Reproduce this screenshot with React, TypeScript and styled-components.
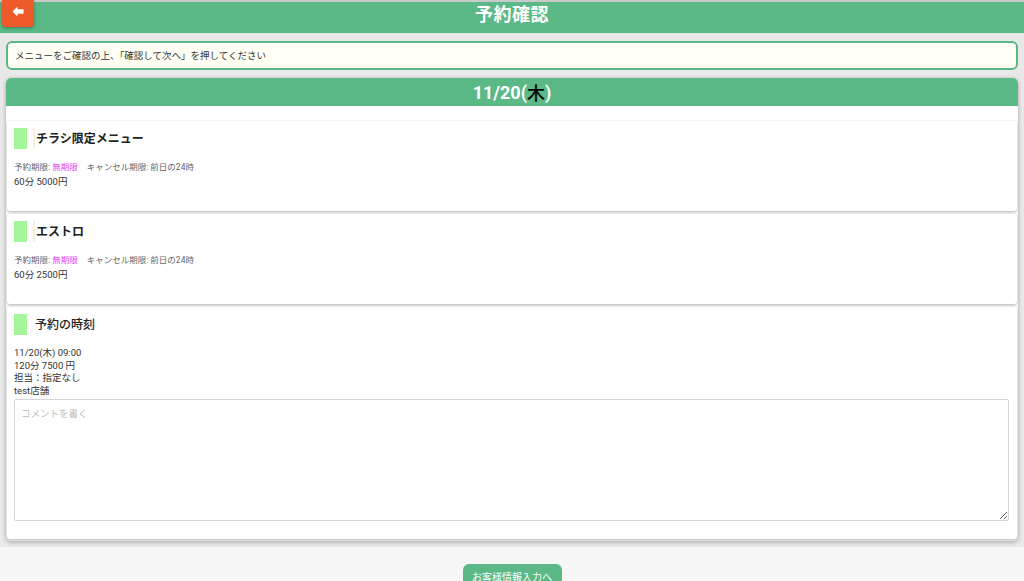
import React from "react";
import styled, { createGlobalStyle } from "styled-components";

const Global = createGlobalStyle`
  html, body { margin: 0; padding: 0; background: #f6f6f6; }
  body { font-family: Roboto, "Noto Sans CJK JP", sans-serif; color: #333; }
  * { box-sizing: border-box; }
`;

const Page = styled.div`
  display: flex;
  flex-direction: column;
  min-height: 581px;
`;

const Header = styled.header`
  position: relative;
  height: 33px;
  background: #5ab987;
  border-top: 2px solid #c9c9c9;
  display: flex;
  align-items: center;
  justify-content: center;
`;

const Title = styled.h1`
  margin: 0;
  margin-top: -10px;
  color: #fff;
  font-size: 18px;
  font-weight: 700;
  letter-spacing: 0.5px;
`;

const BackButton = styled.button`
  position: absolute;
  left: 2px;
  top: -2px;
  width: 32px;
  height: 27px;
  border: none;
  border-radius: 0 0 4px 4px;
  background: #ee5a2a;
  box-shadow: 0 1px 3px rgba(0, 0, 0, 0.35);
  display: flex;
  align-items: center;
  justify-content: center;
  padding: 0;
  padding-bottom: 4px;
`;

const Content = styled.main`
  background: #e9e9e9;
  padding: 8px 6px 6px 6px;
  display: flex;
  flex-direction: column;
  gap: 8px;
`;

const Notice = styled.div`
  height: 29px;
  border: 2px solid #5ab987;
  border-radius: 6px;
  background: #fffff3;
  font-size: 9.5px;
  color: #333;
  display: flex;
  align-items: center;
  padding-left: 7px;
  padding-bottom: 1px;
`;

const Card = styled.section`
  background: #fff;
  border-radius: 5px;
  box-shadow: 0 1px 4px rgba(0, 0, 0, 0.3);
  overflow: hidden;
  padding-bottom: 2px;
`;

const CardHead = styled.div`
  height: 28px;
  background: #5ab987;
  color: #fff;
  font-size: 18px;
  font-weight: 700;
  display: flex;
  align-items: center;
  justify-content: center;
`;

const Dow = styled.span`
  color: #000;
  font-weight: 500;
`;

const CardBody = styled.div`
  padding: 15px 1px 0 1px;
  display: flex;
  flex-direction: column;
  gap: 3px;
`;

const Item = styled.div<{ $h: number }>`
  height: ${(p) => p.$h}px;
  background: #fff;
  border-radius: 3px;
  box-shadow: 0 1px 3px rgba(0, 0, 0, 0.32);
  padding: 7px 7px;
`;

const ItemTitleRow = styled.div`
  display: flex;
  align-items: center;
  gap: 8px;
  height: 20px;
`;

const Swatch = styled.span`
  width: 13px;
  height: 21px;
  background: #a5f59b;
  flex: none;
`;

const ItemTitle = styled.span<{ $line?: boolean }>`
  font-size: 12px;
  font-weight: ${(p) => (p.$line ? 700 : 500)};
  color: #222;
  border-left: ${(p) => (p.$line ? "2px solid #f7f0da" : "none")};
  padding-left: ${(p) => (p.$line ? "1px" : "0")};
  margin-left: ${(p) => (p.$line ? "-2px" : "0")};
  height: 21px;
  display: flex;
  align-items: center;
  padding-bottom: 1px;
`;

const Meta = styled.div`
  margin-top: 13px;
  font-size: 8.5px;
  color: #666;
  line-height: 12px;
`;

const Pink = styled.span`
  color: #e645f2;
  margin-right: 9px;
`;

const Price = styled.div`
  margin-top: 3px;
  font-size: 9.5px;
  color: #333;
  line-height: 12px;
`;

const Info = styled.div`
  margin-top: 13px;
  font-size: 9.5px;
  color: #333;
  line-height: 12.7px;
`;

const Comment = styled.textarea`
  display: block;
  width: 995px;
  height: 122px;
  margin-top: 1px;
  border: 1px solid #d6d6d6;
  border-radius: 2px;
  padding: 6px 6px;
  font-family: Roboto, "Noto Sans CJK JP", sans-serif;
  font-size: 9.5px;
  resize: vertical;
  &::placeholder { color: #bdbdbd; }
`;

const Footer = styled.div`
  display: flex;
  justify-content: center;
  padding-top: 17px;
`;

const NextButton = styled.button`
  width: 99px;
  height: 28px;
  border: none;
  border-radius: 6px;
  background: #5ab987;
  color: #fff;
  font-family: Roboto, "Noto Sans CJK JP", sans-serif;
  font-size: 10px;
  display: flex;
  align-items: flex-start;
  justify-content: center;
  padding-top: 5px;
`;

const menus = [
  { name: "チラシ限定メニュー", price: "60分 5000円" },
  { name: "エストロ", price: "60分 2500円" },
];

export default function App() {
  return (
    <Page>
      <Global />
      <Header>
        <BackButton aria-label="戻る">
          <svg width="12" height="11" viewBox="0 0 12 11">
            <path d="M0.5 5.5 L5.5 0.5 L5.5 3.3 L11.5 3.3 L11.5 7.7 L5.5 7.7 L5.5 10.5 Z" fill="#fff" />
          </svg>
        </BackButton>
        <Title>予約確認</Title>
      </Header>
      <Content>
        <Notice>メニューをご確認の上、「確認して次へ」を押してください</Notice>
        <Card>
          <CardHead>
            11/20(<Dow>木</Dow>)
          </CardHead>
          <CardBody>
            {menus.map((m) => (
              <Item key={m.name} $h={90}>
                <ItemTitleRow>
                  <Swatch />
                  <ItemTitle $line>{m.name}</ItemTitle>
                </ItemTitleRow>
                <Meta>
                  予約期限: <Pink>無期限</Pink>キャンセル期限: 前日の24時
                </Meta>
                <Price>{m.price}</Price>
              </Item>
            ))}
            <Item $h={232}>
              <ItemTitleRow>
                <Swatch />
                <ItemTitle>予約の時刻</ItemTitle>
              </ItemTitleRow>
              <Info>
                11/20(木) 09:00
                <br />
                120分 7500 円
                <br />
                担当：指定なし
                <br />
                test店舗
              </Info>
              <Comment placeholder="コメントを書く" />
            </Item>
          </CardBody>
        </Card>
      </Content>
      <Footer>
        <NextButton>お客様情報入力へ</NextButton>
      </Footer>
    </Page>
  );
}
